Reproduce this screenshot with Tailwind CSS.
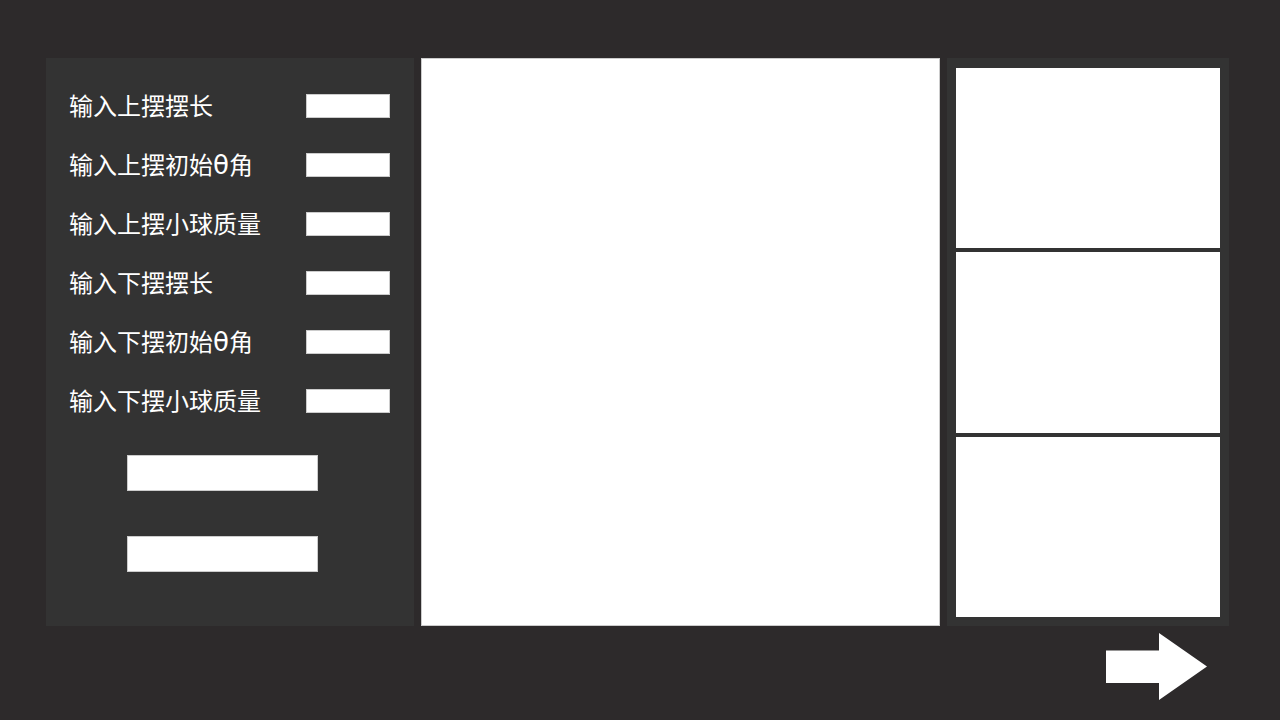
<!DOCTYPE html>
<html lang="zh-CN">
<head>
<meta charset="utf-8">
<meta name="viewport" content="width=device-width, initial-scale=1">
<title>双摆模拟</title>
<script src="https://cdn.jsdelivr.net/npm/@tailwindcss/browser@4"></script>
</head>
<body class="flex min-h-screen flex-col bg-[#2d2a2b] pt-[58px] pr-[51px] pl-[46px] font-['Open_Sans','Noto_Sans_CJK_SC',sans-serif] text-2xl leading-6 text-white">
<main class="grid flex-1 grid-cols-[368fr_519fr_282fr] gap-[7px]">
  <form class="bg-[#333333] pt-9 pr-6 pl-[23px]">
    <div class="flex flex-col gap-[35px]">
      <div class="flex items-center justify-between"><label for="l1">输入上摆摆长</label><input id="l1" type="text" class="h-6 w-21 border border-[#cccccc] bg-white px-1 text-base text-black"></div>
      <div class="flex items-center justify-between"><label for="a1">输入上摆初始<span class="font-['DejaVu_Sans',sans-serif] text-[26px] leading-4">θ</span>角</label><input id="a1" type="text" class="h-6 w-21 border border-[#cccccc] bg-white px-1 text-base text-black"></div>
      <div class="flex items-center justify-between"><label for="m1">输入上摆小球质量</label><input id="m1" type="text" class="h-6 w-21 border border-[#cccccc] bg-white px-1 text-base text-black"></div>
      <div class="flex items-center justify-between"><label for="l2">输入下摆摆长</label><input id="l2" type="text" class="h-6 w-21 border border-[#cccccc] bg-white px-1 text-base text-black"></div>
      <div class="flex items-center justify-between"><label for="a2">输入下摆初始<span class="font-['DejaVu_Sans',sans-serif] text-[26px] leading-4">θ</span>角</label><input id="a2" type="text" class="h-6 w-21 border border-[#cccccc] bg-white px-1 text-base text-black"></div>
      <div class="flex items-center justify-between"><label for="m2">输入下摆小球质量</label><input id="m2" type="text" class="h-6 w-21 border border-[#cccccc] bg-white px-1 text-base text-black"></div>
    </div>
    <div class="mt-[42px] ml-[58px] flex flex-col gap-[45px]">
      <button type="button" aria-label="开始" class="h-9 w-[191px] border border-[#cccccc] bg-white"></button>
      <button type="button" aria-label="重置" class="h-9 w-[191px] border border-[#cccccc] bg-white"></button>
    </div>
  </form>
  <section aria-label="动画" class="border border-[#cccccc] bg-white"></section>
  <aside class="grid grid-rows-3 gap-1 bg-[#333333] px-[9px] pt-[10px] pb-[9px]">
    <div class="bg-white"></div>
    <div class="bg-white"></div>
    <div class="bg-white"></div>
  </aside>
</main>
<footer class="flex h-[94px] justify-end pt-[7px] pr-[22px]">
  <button type="button" aria-label="下一页" class="h-[67px] w-[101px]">
    <svg viewBox="0 0 101 67" class="block size-full" fill="white" aria-hidden="true"><path d="M0 17.5H53V0L101 33.5L53 67V50H0Z"/></svg>
  </button>
</footer>
</body>
</html>
